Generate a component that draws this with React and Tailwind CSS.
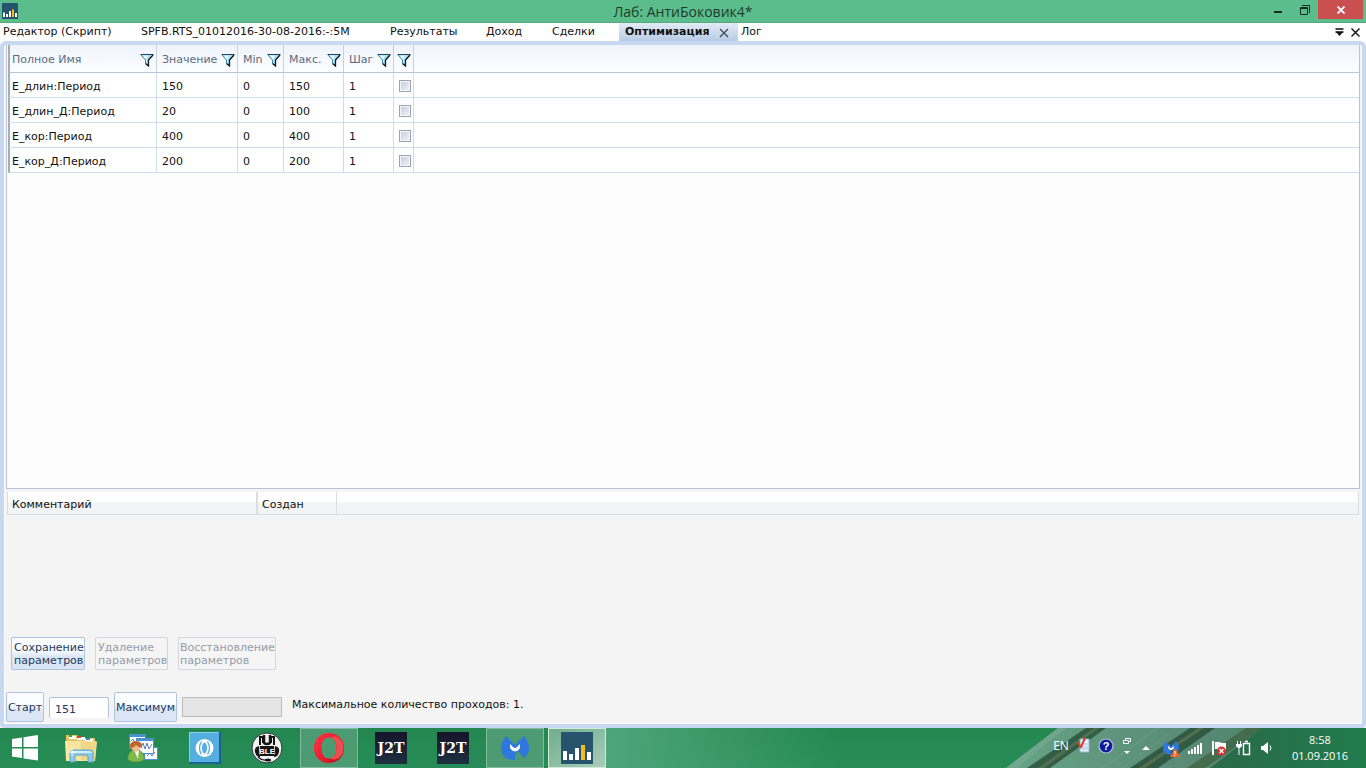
import React from 'react';

const FONT = "font-['DejaVu_Sans',Verdana,sans-serif]";

function ChartLogo({ className }) {
  return (
    <svg viewBox="0 0 32 32" className={className} aria-hidden="true">
      <rect width="32" height="32" fill="#26546c" />
      <path d="M2 19h4v9H2zM8 22h4v6H8zM14 16h4v12h-4zM26 20h4v8h-4z" fill="#fff" />
      <path d="M20 13h4v15h-4z" fill="#f0bf1e" />
    </svg>
  );
}

function FilterIcon() {
  return (
    <svg width="14" height="14" viewBox="0 0 14 14" className="block shrink-0" aria-hidden="true">
      <path d="M1 1.5H13L8.5 7V12.5L5.5 10.5V7Z" fill="#a9dcf3" />
      <path d="M3 2.5H8L6.5 6.5V10L5.5 9V7Z" fill="#e6f8ff" />
      <path d="M0.5 1.5H13.5" stroke="#21485c" />
      <path d="M1 2L5.5 7V10.5" fill="none" stroke="#3a86aa" />
      <path d="M13 2L8.5 7V13L5.5 10.5" fill="none" stroke="#0c1a26" strokeWidth="1.3" />
    </svg>
  );
}

function TitleBar() {
  return (
    <header className="relative flex h-[23px] items-start justify-between border-b border-[#54a97d] bg-[#5bbd8b]">
      <ChartLogo className="mt-[3px] ml-[2px] h-4 w-4" />
      <h1 className="absolute inset-x-0 top-0 text-center font-['Open_Sans','Noto_Sans',sans-serif] text-[14px] leading-6 text-[#1d3b2d]">
        Лаб: АнтиБоковик4*
      </h1>
      <div className="relative flex">
        <button aria-label="Свернуть" className="flex h-[19px] w-[27px] items-center justify-center">
          <svg width="8" height="12" viewBox="0 0 8 12"><path d="M0 8h8" stroke="#172d22" strokeWidth="2" /></svg>
        </button>
        <button aria-label="Восстановить" className="flex h-[19px] w-[27px] items-center justify-center">
          <svg width="10" height="10" viewBox="0 0 10 10" fill="none" stroke="#172d22">
            <path d="M2 .5h7.5V8" /><path d="M.5 2.5h7v7h-7zM.5 3.500h7" />
          </svg>
        </button>
        <button aria-label="Закрыть" className="mr-[3px] flex h-[19px] w-[45px] items-center justify-center bg-[#c9504f]">
          <svg width="8" height="8" viewBox="0 0 8 8"><path d="M.5.5l7 7M7.5.5l-7 7" stroke="#fff" strokeWidth="1.8" /></svg>
        </button>
      </div>
    </header>
  );
}

const tabs = [
  { name: 'Редактор (Скрипт)', width: 'w-[138px]' },
  { name: 'SPFB.RTS_01012016-30-08-2016:-:5M', width: 'w-[249px]' },
  { name: 'Результаты', width: 'w-24' },
  { name: 'Доход', width: 'w-[66px]' },
  { name: 'Сделки', width: 'w-[67px]' },
];

function Tabs() {
  return (
    <nav className="flex h-[18px] items-stretch bg-white pl-[3px] text-[11px] leading-[18px] text-[#111]">
      {tabs.map((t) => (
        <button key={t.name} className={'text-left whitespace-nowrap ' + t.width}>{t.name}</button>
      ))}
      <div className="flex w-[119px] items-start justify-between bg-linear-to-b from-[#e3ebf5] to-[#b8cbe5] pr-[9px] pl-[6px]">
        <button className="font-bold">Оптимизация</button>
        <button aria-label="Закрыть вкладку" className="pt-[5px]">
          <svg width="10" height="10" viewBox="0 0 10 10" className="block"><path d="M1 1l8 8M9 1L1 9" stroke="#3e4a5a" strokeWidth="1.3" /></svg>
        </button>
      </div>
      <button className="ml-[3px]">Лог</button>
      <div className="ml-auto flex items-center gap-[7px] pr-[6px]">
        <button aria-label="Список вкладок">
          <svg width="9" height="8" viewBox="0 0 9 8" className="block"><path d="M.5 1h8M.5 4h8" stroke="#111" strokeWidth="1.6" /><path d="M1 4h7L4.5 8z" fill="#111" /></svg>
        </button>
        <button aria-label="Закрыть">
          <svg width="9" height="9" viewBox="0 0 9 9" className="block"><path d="M.5.5l8 8M8.500.5l-8 8" stroke="#111" strokeWidth="1.4" /></svg>
        </button>
      </div>
    </nav>
  );
}

const rows = [
  ['Е_длин:Период', '150', '0', '150', '1'],
  ['Е_длин_Д:Период', '20', '0', '100', '1'],
  ['Е_кор:Период', '400', '0', '400', '1'],
  ['Е_кор_Д:Период', '200', '0', '200', '1'],
];

const firstCell = 'border-l-2 border-l-[#a4adb9] pl-[2px] ';
const cell = 'pl-[5px] ';

function ParamGrid() {
  const heads = ['Полное Имя', 'Значение', 'Min', 'Макс.', 'Шаг'];
  return (
    <section className="min-h-[200px] flex-1 border border-t-0 border-[#b9c3d1] bg-[#fcfcfc] pl-px">
      <table className="w-full table-fixed border-separate border-spacing-0 text-left">
        <colgroup>
          <col className="w-[149px]" />
          <col className="w-[81px]" />
          <col className="w-[46px]" />
          <col className="w-[60px]" />
          <col className="w-[50px]" />
          <col className="w-[20px]" />
          <col />
        </colgroup>
        <thead>
          <tr className="h-7 bg-linear-to-b from-[#eff4fb] to-[#fcfdff] text-[#5b6b82]">
            {heads.map((h, i) => (
              <th key={h} className={(i === 0 ? firstCell : cell) + 'border-r border-b border-r-[#c6d2e2] border-b-[#b9c6d6] py-0 pr-[2px] font-normal'}>
                <div className="flex items-center justify-between pt-[2px]">
                  <span className="pt-px">{h}</span>
                  <button aria-label={'Фильтр: ' + h}><FilterIcon /></button>
                </div>
              </th>
            ))}
            <th className="border-r border-b border-r-[#c6d2e2] border-b-[#b9c6d6] p-0">
              <div className="flex justify-center pt-[2px]"><button aria-label="Фильтр отметок"><FilterIcon /></button></div>
            </th>
            <th className="border-b border-b-[#b9c6d6] p-0" />
          </tr>
        </thead>
        <tbody>
          {rows.map((r) => (
            <tr key={r[0]} className="h-[25px] bg-white text-[#111]">
              {r.map((c, i) => (
                <td key={i} className={(i === 0 ? firstCell : cell) + 'border-r border-b border-r-[#cfdeef] border-b-[#cfdeef] pt-[3px] pr-0 pb-0'}>{c}</td>
              ))}
              <td className="border-r border-b border-[#cfdeef] p-0 pt-[2px]">
                <div className="flex justify-end pr-[2px]">
                  <input type="checkbox" aria-label={r[0]} className="h-3 w-3 appearance-none border border-[#9aa3b0] bg-linear-to-br from-[#c5ccd9] to-[#f1f4f9] shadow-[inset_0_0_0_1px_#f4f6fa]" />
                </div>
              </td>
              <td className="border-b border-[#cfdeef] p-0" />
            </tr>
          ))}
        </tbody>
      </table>
    </section>
  );
}

function Comments() {
  return (
    <section className="h-[148px] px-px pt-[3px]">
      <table className="w-full table-fixed border-separate border-spacing-0 text-left text-[#111]">
        <colgroup><col className="w-[251px]" /><col className="w-[79px]" /><col /></colgroup>
        <thead>
          <tr className="h-[23px] bg-linear-to-b from-white from-40% to-[#f2f3f4] to-50%">
            <th className="border-r-2 border-b border-l border-[#dcdddf] pt-[3px] pb-0 pl-1 font-normal">Комментарий</th>
            <th className="border-r border-b border-[#dcdddf] pt-[3px] pb-0 pl-1 font-normal">Создан</th>
            <th className="border-r border-b border-[#dcdddf] p-0" />
          </tr>
        </thead>
      </table>
    </section>
  );
}

const btn = 'rounded-[2px] border border-[#b0c4de] bg-linear-to-b from-[#fafcff] from-40% to-[#dbe6f5] to-60% whitespace-nowrap leading-[13px] text-[#23395a] ';
const btnOff = 'rounded-[2px] border border-[#d3d6da] bg-[#f5f5f5] text-left whitespace-nowrap leading-[13px] text-[#939ca8] ';

function Controls() {
  return (
    <section className="pb-[2px]">
      <div className="flex gap-[10px] pl-[5px]">
        <button className={btn + 'h-[33px] w-[74px] px-[2px] text-left'}>Сохранение<br />параметров</button>
        <button disabled className={btnOff + 'h-[33px] w-[73px] px-[2px]'}>Удаление<br />параметров</button>
        <button disabled className={btnOff + 'h-[33px] w-[98px] px-px'}>Восстановление<br />параметров</button>
      </div>
      <div className="mt-[22px] flex items-center gap-[5px]">
        <button className={btn + 'h-[30px] w-[38px]'}>Старт</button>
        <input aria-label="Количество проходов" defaultValue="151" className="h-[21px] w-[60px] rounded-[2px] border border-b-0 border-[#b0c4de] bg-white px-[5px] pt-[3px] text-[#23395a]" />
        <button className={btn + 'h-[30px] w-[63px]'}>Максимум</button>
        <div role="progressbar" aria-label="Ход оптимизации" className="h-5 w-[100px] border border-[#bcbcbc] bg-[#e5e5e5]" />
        <p className="ml-[5px] pb-1 text-[#111]">Максимальное количество проходов: 1.</p>
      </div>
    </section>
  );
}

function ExplorerIcon() {
  return (
    <svg width="34" height="30" viewBox="0 0 34 30" aria-hidden="true">
      <path d="M2 5V2h11l2 3h16v22H2z" fill="#e3c467" />
      <path d="M5 3h7v3H5z" fill="#fff" /><path d="M5 2h3v2H5z" fill="#35a548" />
      <path d="M13 4h8v3h-8z" fill="#fff" /><path d="M13 3h4v2h-4z" fill="#d5412d" />
      <path d="M21 6h8v3h-8z" fill="#fff" /><path d="M22 5h4v2h-4z" fill="#3d86c9" />
      <path d="M1 8h30l2 1-2 19H2z" fill="#f8e6a0" />
      <path d="M17 9h15l-1 18H17z" fill="#f0d788" />
      <path d="M6 29V20q0-3 3-3h17q3 0 3 3v9h-5v-5q0-2-2-2h-9q-2 0-2 2v5z" fill="#8bcbea" stroke="#5aa6cd" />
      <path d="M7 20q0-2 3-2h15q3 0 3 2z" fill="#d3effb" />
      <path d="M8 15v8M4 19h8" stroke="#fff" />
    </svg>
  );
}

function TraderIcon() {
  return (
    <svg width="32" height="30" viewBox="0 0 32 30" aria-hidden="true">
      <g fill="#fff" stroke="#4b91cf"><path d="M2.5 1.5h16v14h-16z" /><path d="M17.5 14.5h13v12h-13z" /><path d="M9.5 5.5h17v15h-17z" /></g>
      <path d="M2 1h17v3H2zM9 5h18v3H9z" fill="#4b91cf" />
      <path d="M4 8l2-2 2 4M14 15l2-5 2 6 2-6 2 6 3-5M20 23l3-3 2 3 3-4" fill="none" stroke="#5d7fc0" />
      <path d="M1 27q-1-7 5-10h6q6 3 5 10-8 4-16 0z" fill="#7fb84b" stroke="#578b30" strokeWidth=".6" />
      <path d="M7 17h5l-1 9z" fill="#f2f5e4" />
      <circle cx="9" cy="14" r="4.5" fill="#f0b987" />
      <path d="M3 15q-1-7 6-7t6 7q-4-1-6-3-2 3-6 3z" fill="#c0652b" />
    </svg>
  );
}

function CoinIcon() {
  return (
    <svg width="32" height="32" viewBox="0 0 32 32" aria-hidden="true">
      <path d="M0 0h32v32H0z" fill="#1d6091" /><path d="M0 0h30v30H0z" fill="#54aee0" />
      <path d="M0 0h30l-1 1H1v28l-1 1z" fill="#8bcdf0" />
      <circle cx="15.500" cy="16" r="9" fill="#fff" />
      <path d="M12.500 9.500q-4 6.500 0 13M18.500 9.500q4 6.500 0 13" fill="none" stroke="#54aee0" strokeWidth="1.3" />
      <ellipse cx="15.500" cy="16" rx="2.500" ry="5.500" fill="#54aee0" />
    </svg>
  );
}

function BleIcon() {
  return (
    <svg width="32" height="32" viewBox="0 0 32 32" aria-hidden="true">
      <circle cx="16" cy="16" r="15" fill="#f2f2f2" stroke="#333" />
      <path d="M9 13V5h3v6M23 13V5h-3v6" fill="none" stroke="#151515" strokeWidth="2" />
      <path d="M13 3v7q0 2 3 2t3-2V3" fill="none" stroke="#151515" strokeWidth="2.5" />
      <path d="M8 14q-5 1-4 6 1 5 5 5zM24 14q5 1 4 6-1 5-5 5z" fill="#151515" />
      <path d="M9 14h14v10H9z" fill="#151515" />
      <text x="16" y="22" textAnchor="middle" fontFamily="Liberation Sans, sans-serif" fontWeight="700" fontSize="8" fill="#fff">BLE</text>
      <path d="M7 25q4 4 9 3" fill="none" stroke="#151515" strokeWidth="1.3" /><ellipse cx="17" cy="28" rx="3" ry="1.500" fill="#151515" />
    </svg>
  );
}

function OperaIcon() {
  return (
    <svg width="32" height="32" viewBox="0 0 32 32" aria-hidden="true">
      <defs><linearGradient id="opera" x1="0" y1="0" x2="1" y2="1"><stop offset="0" stopColor="#ff3545" /><stop offset=".6" stopColor="#e51c2c" /><stop offset="1" stopColor="#a80d1a" /></linearGradient></defs>
      <path fillRule="evenodd" d="M16 1C7 1 1 7.5 1 16s6 15 15 15 15-6.5 15-15S25 1 16 1zm0 4.500c5 0 7.500 4.500 7.500 10.500S21 26.500 16 26.500 8.500 22 8.500 16 11 5.500 16 5.500z" fill="url(#opera)" />
      <path d="M18 5.500q4-2 8 .5c6 5 6 15 0 20q-4 2.500-9 .5 6.500-2 6.500-10.500T18 5.500z" fill="#ef4c50" />
    </svg>
  );
}

function JtIcon() {
  return (
    <span className="flex h-8 w-8 items-center justify-center bg-linear-to-b from-[#15142b] to-[#1e3040] font-['DejaVu_Serif','Liberation_Serif',serif] text-[14px] leading-none font-bold text-white">J2T</span>
  );
}

function MbIcon({ className }) {
  return (
    <svg viewBox="0 0 28 24" className={className} aria-hidden="true">
      <path d="M5 0L14 9 23 0Q28 6 28 12 28 18 23 22L17 15 14 18V24Q4 24 1 17-2 9 5 0z" fill="#2d77de" />
      <path d="M9 8l3 3q2 2 4 0l3-3q1 7-5 7.500Q8 15 9 8z" fill="#fff" />
    </svg>
  );
}

function Wallpaper() {
  return (
    <svg width="426" height="40" viewBox="0 0 426 40" className="absolute top-0 right-0" aria-hidden="true">
      <defs>
        <linearGradient id="wl"><stop offset="0" stopColor="#67a486" /><stop offset=".5" stopColor="#598b76" /><stop offset="1" stopColor="#42785a" /></linearGradient>
        <linearGradient id="wr"><stop offset="0" stopColor="#2a6949" /><stop offset="1" stopColor="#217c4c" /></linearGradient>
      </defs>
      <path d="M118 0H426V40H66z" fill="url(#wl)" />
      <path d="M118 0h8L76 40h-10z" fill="#7eae96" opacity=".5" />
      <path d="M146 0h20L110 40H87z" fill="#315e44" />
      <path d="M154 0h5L104 40h-6z" fill="#506f50" />
      <path d="M250 0h25L218 40h-28z" fill="#315a45" /><path d="M258 0h6L205 40h-6z" fill="#526e4f" />
      <path d="M306 0h17L265 40h-18z" fill="#436b4c" />
      <path d="M322 0H426V40H270z" fill="url(#wr)" />
      <path d="M216 0h3L164 40h-3zM236 0h2L183 40h-2z" fill="#83a994" opacity=".25" />
    </svg>
  );
}

const apps = [
  { name: 'Проводник', icon: <ExplorerIcon /> },
  { name: 'Торговый терминал', icon: <TraderIcon /> },
  { name: 'Монета', icon: <CoinIcon /> },
  { name: 'UBLE', icon: <BleIcon /> },
  { name: 'Opera', icon: <OperaIcon />, state: 'open' },
  { name: 'J2T', icon: <JtIcon /> },
  { name: 'J2T 2', icon: <JtIcon /> },
  { name: 'Malwarebytes', icon: <MbIcon className="h-6 w-7" />, state: 'open' },
  { name: 'Лаб', icon: <ChartLogo className="h-8 w-8" />, state: 'active' },
];

const appState = {
  open: 'border-[#84bb9e] bg-[#4d9b73]',
  active: 'border-[#d4e8dc] bg-linear-to-br from-[#6fae8d] to-[#a7cdb8]',
  idle: 'border-transparent',
};

function Tray() {
  return (
    <div className="relative ml-auto flex items-center text-white">
      <button className="mr-1 mb-[5px] font-['Open_Sans','Noto_Sans',sans-serif] text-[12px]">EN</button>
      <div className="flex items-center">
        <button aria-label="Проверка правописания" className="mb-1 flex w-[22px] justify-center">
          <svg width="14" height="16" viewBox="0 0 14 16"><path d="M3 1h9v13H3z" fill="#e9f2fb" stroke="#9ab0c8" /><path d="M5 6h6M5 9h6M5 11h6" stroke="#a6c0df" /><path d="M1 5l3 4 4-9" fill="none" stroke="#e33a22" strokeWidth="2" /></svg>
        </button>
        <button aria-label="Справка" className="mb-1 flex w-[22px] justify-center">
          <svg width="16" height="16" viewBox="0 0 16 16"><circle cx="8" cy="8" r="7" fill="#0b1ca0" stroke="#b5bfdb" strokeWidth="1.2" /><text x="8" y="12" textAnchor="middle" fontFamily="Liberation Sans, sans-serif" fontWeight="700" fontSize="11" fill="#fff">?</text></svg>
        </button>
        <button aria-label="Языковая панель" className="mb-1 flex w-[20px] justify-center">
          <svg width="8" height="18" viewBox="0 0 8 18"><path d="M2.5 3V1.500h5v3H6M.5 3.500h5v3h-5z" fill="none" stroke="#fff" /><path d="M1 14h6l-3 3z" fill="#fff" /></svg>
        </button>
        <button aria-label="Скрытые значки" className="flex w-[18px] justify-center">
          <svg width="8" height="6" viewBox="0 0 8 6"><path d="M0 5h8L4 1z" fill="#fff" /></svg>
        </button>
        <button aria-label="Malwarebytes" className="relative ml-[4px] flex w-6 justify-center">
          <MbIcon className="h-[14px] w-4" />
          <svg width="10" height="9" viewBox="0 0 10 9" className="absolute right-[3px] -bottom-[2px]"><path d="M5 0l5 9H0z" fill="#ee6a2c" /><path d="M5 3v3M5 7v1" stroke="#fff" /></svg>
        </button>
        <button aria-label="Сеть" className="flex w-6 justify-center">
          <svg width="16" height="14" viewBox="0 0 16 14"><path d="M1 10h2v3H1zM4 8h2v5H4zM7 6h2v7H7zM10 4h2v9h-2zM13 2h2v11h-2z" fill="#fff" /></svg>
        </button>
        <button aria-label="Центр поддержки" className="flex w-6 justify-center">
          <svg width="16" height="16" viewBox="0 0 16 16"><path d="M2 1v14" stroke="#fff" strokeWidth="2" /><path d="M4 2h5l1 1h5v7H9L8 9H4z" fill="#fff" /><circle cx="10.500" cy="11" r="4.500" fill="#d63332" /><path d="M8.500 9l4 4M12.500 9l-4 4" stroke="#fff" strokeWidth="1.4" /></svg>
        </button>
        <button aria-label="Питание" className="flex w-6 justify-center">
          <svg width="16" height="16" viewBox="0 0 16 16" fill="none" stroke="#fff"><path d="M8.500 3.500h6v11h-6zM10 1.500h3" strokeWidth="1.4" /><path d="M2.500 1v3M5.500 1v3M4 7v8" /><path d="M1 4h6v2L5 8H3L1 6z" fill="#fff" stroke="none" /></svg>
        </button>
        <button aria-label="Громкость" className="flex w-6 justify-center">
          <svg width="14" height="14" viewBox="0 0 14 14"><path d="M1 5h2l5-4v12L3 9H1z" fill="#fff" /><path d="M10 4.500q2 2.500 0 5" fill="none" stroke="#fff" /></svg>
        </button>
      </div>
      <time className="mr-[18px] ml-[13px] text-center font-['Open_Sans','Noto_Sans',sans-serif] text-[11px] leading-4">8:58<br />01.09.2016</time>
    </div>
  );
}

function Taskbar() {
  return (
    <footer className="relative flex h-10 items-stretch overflow-hidden bg-linear-to-b from-[#23874f] to-[#278d58]">
      <div className="absolute inset-y-0 left-[600px] w-60 bg-linear-to-r from-[#4fa67a] to-transparent" />
      <Wallpaper />
      <button aria-label="Пуск" className="relative flex w-[50px] items-center justify-center">
        <svg width="28" height="26" viewBox="0 0 28 26"><path d="M1 4l10-1.500V12H1zM12.500 2.200L27 0v12H12.500zM1 13.500h10V23L1 21.500zM12.500 13.500H27v12l-14.500-2z" fill="#fff" /></svg>
      </button>
      <div className="relative ml-[2px] flex gap-1">
        {apps.map((a) => (
          <button key={a.name} aria-label={a.name} className={'flex w-[58px] items-center justify-center border ' + appState[a.state || 'idle']}>
            {a.icon}
          </button>
        ))}
      </div>
      <Tray />
    </footer>
  );
}

export default function App() {
  return (
    <div className={'flex min-h-screen flex-col bg-white text-[11px] leading-[14px] ' + FONT}>
      <TitleBar />
      <Tabs />
      <main className="flex flex-1 flex-col rounded-t-[6px] rounded-b-[4px] border-4 border-[#c9d8f1] bg-[#f4f4f4] px-[2px] shadow-[inset_0_0_0_1px_#fafbfd]">
        <ParamGrid />
        <Comments />
        <Controls />
      </main>
      <Taskbar />
    </div>
  );
}
